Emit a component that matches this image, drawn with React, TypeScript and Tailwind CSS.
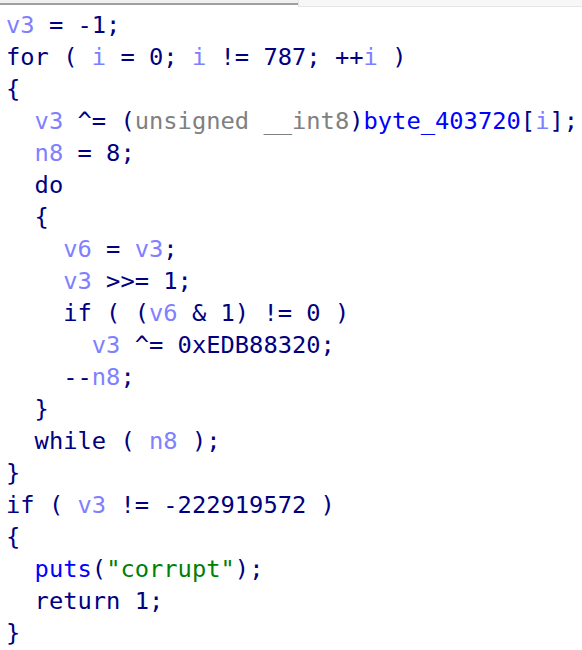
import React from "react";

type Tok = [string, string];
const N = "text-[#000080]";
const V = "text-[#8080ff]";
const F = "text-[#0000ff]";
const S = "text-[#008000]";
const T = "text-[#808080]";

const lines: Tok[][] = [
  [[V, "v3"], [N, " = -1;"]],
  [[N, "for ( "], [V, "i"], [N, " = 0; "], [V, "i"], [N, " != 787; ++"], [V, "i"], [N, " )"]],
  [[N, "{"]],
  [[N, "  "], [V, "v3"], [N, " ^= ("], [T, "unsigned __int8"], [N, ")"], [F, "byte_403720"], [N, "["], [V, "i"], [N, "];"]],
  [[N, "  "], [V, "n8"], [N, " = 8;"]],
  [[N, "  do"]],
  [[N, "  {"]],
  [[N, "    "], [V, "v6"], [N, " = "], [V, "v3"], [N, ";"]],
  [[N, "    "], [V, "v3"], [N, " >>= 1;"]],
  [[N, "    if ( ("], [V, "v6"], [N, " & 1) != 0 )"]],
  [[N, "      "], [V, "v3"], [N, " ^= 0xEDB88320;"]],
  [[N, "    --"], [V, "n8"], [N, ";"]],
  [[N, "  }"]],
  [[N, "  while ( "], [V, "n8"], [N, " );"]],
  [[N, "}"]],
  [[N, "if ( "], [V, "v3"], [N, " != -222919572 )"]],
  [[N, "{"]],
  [[N, "  "], [F, "puts"], [N, "("], [S, "\"corrupt\""], [N, ");"]],
  [[N, "  return 1;"]],
  [[N, "}"]],
];

export default function App() {
  return (
    <div className="w-[582px] h-[650px] bg-white overflow-hidden relative">
      <div className="flex h-[7px]">
        <div className="w-[298px] h-[5px] bg-[#f0f0f0] border-b-2 border-[#a0a0a0]" />
        <div className="w-px h-[7px] bg-[#e3e3e3]" />
        <div className="flex-1 h-[7px] bg-[#f7f7f7] border-b border-[#e6e6e6]" />
      </div>
      <div
        className="pl-[6px] pt-[2px] text-[23.75px] leading-[32px] whitespace-pre"
        style={{ fontFamily: '"DejaVu Sans Mono", monospace' }}
      >
        {lines.map((l, i) => (
          <div key={i} className="h-[32px]">
            {l.map(([c, t], j) => (
              <span key={j} className={c}>
                {t}
              </span>
            ))}
          </div>
        ))}
      </div>
    </div>
  );
}
